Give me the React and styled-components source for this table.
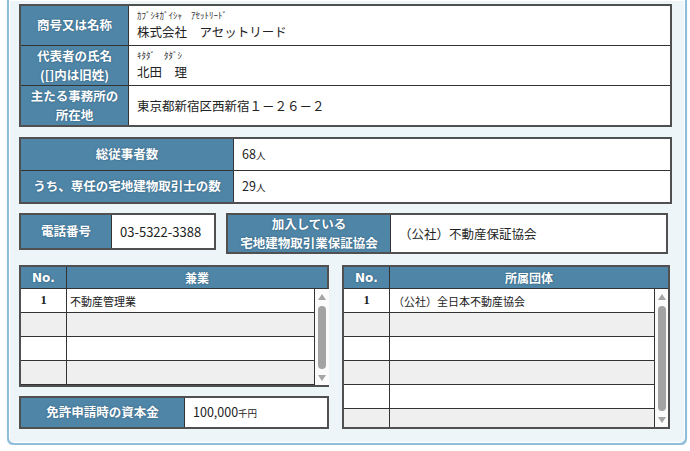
import React from 'react';
import styled, { createGlobalStyle } from 'styled-components';

const GlobalStyle = createGlobalStyle`
    html, body {
        margin: 0;
        padding: 0;
        background: #fff;
    }

    body {
        font-family: "Noto Sans CJK JP", "Noto Sans", sans-serif;
        color: #222;
    }
`;

const Panel = styled.div`
    box-sizing: border-box;
    width: 680px;
    margin-left: 7px;
    background: #eef5f8;
    border: 2px solid #8dbdd8;
    border-top: none;
    border-radius: 0 0 7px 7px;
    box-shadow: inset 0 0 0 1px #fff, 0 1px 1px #b9d6e6;
    padding: 4px 13px 14px 10px;
    display: flex;
    flex-direction: column;
`;

const Table = styled.div`
    display: flex;
    flex-direction: column;
    background: #fff;
    border: 2px solid #505050;
    margin-top: ${({ $gap }) => $gap || 0}px;
    width: ${({ $width }) => ($width ? `${$width}px` : 'auto')};
    box-sizing: border-box;
`;

const Row = styled.div`
    display: flex;
    height: ${({ $height }) => $height}px;
    & + & {
        border-top: 1px solid #333;
    }
`;

const Label = styled.div`
    flex: 0 0 ${({ $width }) => $width}px;
    box-sizing: border-box;
    background: #4f85a6;
    border-right: 1px solid #333;
    color: #fff;
    font-weight: bold;
    font-size: 12.5px;
    line-height: 18.5px;
    text-align: center;
    text-shadow: 0 0 2px #2b5877;
    display: flex;
    align-items: center;
    justify-content: center;
`;

const Value = styled.div`
    flex: 1;
    display: flex;
    flex-direction: column;
    justify-content: center;
    padding-left: ${({ $pad }) => $pad || 8}px;
    font-size: ${({ $size }) => $size || 12.5}px;
    line-height: 17px;
`;

const Kana = styled.span`
    font-size: 9px;
    line-height: 10px;
    margin-bottom: 2px;
    color: #333;
`;

const Unit = styled.small`
    font-size: 9.5px;
`;

const Line = styled.div`
    display: flex;
    gap: ${({ $gap }) => $gap}px;
    margin-top: ${({ $top }) => $top}px;
    align-items: flex-start;
`;

const Column = styled.div`
    display: flex;
    flex-direction: column;
    width: ${({ $width }) => $width}px;
`;

const List = styled.div`
    display: flex;
    flex-direction: column;
    border: 2px solid #505050;
    border-right-width: ${({ $open }) => ($open ? 0 : 2)}px;
    background: #fff;
`;

const Head = styled.div`
    display: flex;
    height: 21px;
    background: #4f85a6;
    border-bottom: 1px solid #333;
    border-right: ${({ $open }) => ($open ? '2px solid #505050' : 'none')};
    color: #fff;
    font-weight: bold;
    font-size: 12px;
    text-shadow: 0 0 2px #2b5877;
`;

const HeadCell = styled.div`
    flex: ${({ $no }) => ($no ? '0 0 45px' : '1')};
    border-right: ${({ $no }) => ($no ? '1px solid #333' : 'none')};
    display: flex;
    align-items: center;
    justify-content: center;
    font-family: ${({ $no }) => ($no ? '"DejaVu Sans", sans-serif' : 'inherit')};
`;

const Body = styled.div`
    display: flex;
    height: ${({ $height }) => $height}px;
    overflow: hidden;
`;

const Rows = styled.div`
    flex: 1;
    display: flex;
    flex-direction: column;
    border-right: 1px solid #333;
`;

const ListRow = styled.div`
    flex: 0 0 23px;
    display: flex;
    background: ${({ $odd }) => ($odd ? '#efefef' : '#fff')};
    border-bottom: 1px solid #333;
`;

const NoCell = styled.div`
    flex: 0 0 45px;
    border-right: 1px solid #333;
    display: flex;
    align-items: center;
    justify-content: center;
    font-family: "Liberation Serif", serif;
    font-weight: bold;
    font-size: 12.5px;
`;

const TextCell = styled.div`
    flex: 1;
    display: flex;
    align-items: center;
    padding-left: 3px;
    font-size: 11px;
`;

const Scrollbar = styled.div`
    flex: 0 0 ${({ $width }) => $width}px;
    background: #fbfbfb;
    display: flex;
    flex-direction: column;
    align-items: center;
    padding: 5px 0 4px;
    gap: 6px;
    box-sizing: border-box;
`;

const Arrow = styled.div`
    width: 0;
    height: 0;
    border-left: 4px solid transparent;
    border-right: 4px solid transparent;
    ${({ $down }) => ($down
        ? 'border-top: 6px solid #a5a5a5;'
        : 'border-bottom: 6px solid #a5a5a5;')}
`;

const Thumb = styled.div`
    flex: 1;
    width: 8px;
    border-radius: 4px;
    background: #a3a3a3;
`;

const sideRows = (count, first) => Array.from({ length: count }, (_, i) => (
    <ListRow key={i} $odd={i % 2 === 1}>
        <NoCell>{i === 0 ? '1' : ''}</NoCell>
        <TextCell>{i === 0 ? first : ''}</TextCell>
    </ListRow>
));

const ItemList = ({ title, first, count, height, barWidth, open }) => (
    <List $open={open}>
        <Head $open={open}>
            <HeadCell $no>No.</HeadCell>
            <HeadCell>{title}</HeadCell>
        </Head>
        <Body $height={height}>
            <Rows>{sideRows(count, first)}</Rows>
            <Scrollbar $width={barWidth}>
                <Arrow />
                <Thumb />
                <Arrow $down />
            </Scrollbar>
        </Body>
    </List>
);

export default function App() {
    return (
        <>
            <GlobalStyle />
            <Panel>
                <Table>
                    <Row $height={39}>
                        <Label $width={108}>商号又は名称</Label>
                        <Value>
                            <Kana>ｶﾌﾞｼｷｶﾞｲｼｬ　ｱｾｯﾄﾘｰﾄﾞ</Kana>
                            <span>株式会社　アセットリード</span>
                        </Value>
                    </Row>
                    <Row $height={39}>
                        <Label $width={108}>代表者の氏名<br />([]内は旧姓)</Label>
                        <Value>
                            <Kana>ｷﾀﾀﾞ　ﾀﾀﾞｼ</Kana>
                            <span>北田　理</span>
                        </Value>
                    </Row>
                    <Row $height={39}>
                        <Label $width={108}>主たる事務所の<br />所在地</Label>
                        <Value>東京都新宿区西新宿１－２６－２</Value>
                    </Row>
                </Table>

                <Table $gap={10}>
                    <Row $height={31}>
                        <Label $width={213}>総従事者数</Label>
                        <Value>
                            <span>68<Unit>人</Unit></span>
                        </Value>
                    </Row>
                    <Row $height={31}>
                        <Label $width={213}>うち、専任の宅地建物取引士の数</Label>
                        <Value>
                            <span>29<Unit>人</Unit></span>
                        </Value>
                    </Row>
                </Table>

                <Line $gap={10} $top={9}>
                    <Table $width={197}>
                        <Row $height={33}>
                            <Label $width={91}>電話番号</Label>
                            <Value $size={13}>03-5322-3388</Value>
                        </Row>
                    </Table>
                    <Table $width={442}>
                        <Row $height={37}>
                            <Label $width={163}>加入している<br />宅地建物取引業保証協会</Label>
                            <Value>（公社）不動産保証協会</Value>
                        </Row>
                    </Table>
                </Line>

                <Line $gap={13} $top={11}>
                    <Column $width={310}>
                        <ItemList
                            title="兼業"
                            first="不動産管理業"
                            count={4}
                            height={96}
                            barWidth={14}
                            open
                        />
                        <Table $gap={9}>
                            <Row $height={29}>
                                <Label $width={164}>免許申請時の資本金</Label>
                                <Value>
                                    <span>100,000<Unit>千円</Unit></span>
                                </Value>
                            </Row>
                        </Table>
                    </Column>
                    <Column $width={328}>
                        <ItemList
                            title="所属団体"
                            first="（公社）全日本不動産協会"
                            count={6}
                            height={138}
                            barWidth={13}
                        />
                    </Column>
                </Line>
            </Panel>
        </>
    );
}
